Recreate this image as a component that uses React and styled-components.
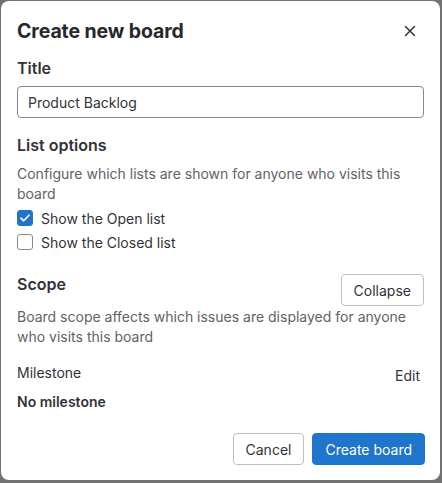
import React, { useState } from 'react';
import styled, { createGlobalStyle } from 'styled-components';

const GlobalStyle = createGlobalStyle`
  html, body {
    margin: 0;
    padding: 0;
    background: #727272;
    font-family: Inter, "Noto Sans", sans-serif;
    color: #333238;
  }
  * { box-sizing: border-box; }
`;

const Page = styled.div`
  width: 442px;
  height: 483px;
  padding: 1px 2px 3px 1px;
`;

const Modal = styled.div`
  width: 439px;
  height: 479px;
  background: #ffffff;
  border-radius: 8px;
  display: flex;
  flex-direction: column;
`;

const Header = styled.div`
  display: flex;
  align-items: center;
  justify-content: space-between;
  padding: 15px 16px 0 16px;
  height: 44px;
`;

const ModalTitle = styled.h2`
  margin: 0;
  font-size: 19.5px;
  font-weight: 700;
  color: #28272d;
  letter-spacing: -0.1px;
`;

const CloseButton = styled.button`
  border: none;
  background: none;
  padding: 4px;
  margin-right: 4px;
  display: flex;
  cursor: pointer;
`;

const Body = styled.div`
  padding: 13px 16px 0 16px;
  flex: 1;
`;

const Label = styled.div`
  font-size: 16px;
  font-weight: 600;
  line-height: 20px;
  color: #333238;
  margin-bottom: ${({ mb }) => mb ?? 8}px;
`;

const Input = styled.input`
  width: 100%;
  height: 32px;
  border: 1px solid #89888d;
  border-radius: 4px;
  padding: 0 10px;
  font-family: inherit;
  font-size: 14px;
  color: #333238;
  outline: none;
`;

const Section = styled.div`
  margin-top: ${({ mt }) => mt || 0}px;
`;

const Hint = styled.p`
  margin: 0 0 ${({ mb }) => mb ?? 2}px 0;
  font-size: 14px;
  line-height: 20px;
  color: #626168;
`;

const CheckRow = styled.label`
  display: flex;
  align-items: center;
  gap: 8px;
  height: 24px;
  font-size: 14px;
  color: #333238;
  cursor: pointer;
`;

const Box = styled.span`
  width: 16px;
  height: 16px;
  border-radius: 3px;
  border: 1px solid ${({ on }) => (on ? '#1f75cb' : '#89888d')};
  background: ${({ on }) => (on ? '#1f75cb' : '#ffffff')};
  display: flex;
  align-items: center;
  justify-content: center;
`;

const ScopeHead = styled.div`
  display: flex;
  justify-content: space-between;
  align-items: flex-start;
  margin-bottom: 1px;
`;

const Button = styled.button`
  height: 32px;
  padding: 0 ${({ px }) => px || 12}px;
  border-radius: 4px;
  font-family: inherit;
  font-size: 14px;
  cursor: pointer;
  border: 1px solid ${({ primary }) => (primary ? '#1f75cb' : '#bfbfc3')};
  background: ${({ primary }) => (primary ? '#1f75cb' : '#ffffff')};
  color: ${({ primary }) => (primary ? '#ffffff' : '#333238')};
`;

const FieldRow = styled.div`
  display: flex;
  justify-content: space-between;
  align-items: flex-end;
  font-size: 14px;
  color: #333238;
  margin-top: 17px;
  padding-right: 4px;
`;

const EditLink = styled.span`
  font-size: 14px;
  color: #333238;
  margin-bottom: -3px;
`;

const Value = styled.div`
  font-size: 14px;
  font-weight: 600;
  color: #333238;
  margin-top: 12px;
`;

const Footer = styled.div`
  display: flex;
  justify-content: flex-end;
  gap: 8px;
  padding: 0 15px 15px 16px;
`;

function Check({ on }) {
  return (
    <Box on={on ? 1 : 0}>
      {on && (
        <svg width="10" height="8" viewBox="0 0 10 8" fill="none">
          <path d="M1 4.2L3.7 6.8L9 1.2" stroke="#fff" strokeWidth="1.6" strokeLinecap="round" strokeLinejoin="round" />
        </svg>
      )}
    </Box>
  );
}

export default function App() {
  const [title, setTitle] = useState('Product Backlog');
  return (
    <>
      <GlobalStyle />
      <Page>
        <Modal>
          <Header>
            <ModalTitle>Create new board</ModalTitle>
            <CloseButton aria-label="Close">
              <svg width="12" height="12" viewBox="0 0 12 12">
                <path d="M1.5 1.5L10.5 10.5M10.5 1.5L1.5 10.5" stroke="#333238" strokeWidth="1.5" strokeLinecap="round" />
              </svg>
            </CloseButton>
          </Header>
          <Body>
            <Label>Title</Label>
            <Input value={title} onChange={(e) => setTitle(e.target.value)} />
            <Section mt={17}>
              <Label mb={9}>List options</Label>
              <Hint>Configure which lists are shown for anyone who visits this board</Hint>
              <CheckRow><Check on />Show the Open list</CheckRow>
              <CheckRow><Check />Show the Closed list</CheckRow>
            </Section>
            <Section mt={20}>
              <ScopeHead>
                <Label mb={0}>Scope</Label>
                <Button>Collapse</Button>
              </ScopeHead>
              <Hint mb={0}>Board scope affects which issues are displayed for anyone who visits this board</Hint>
              <FieldRow>
                <span>Milestone</span>
                <EditLink>Edit</EditLink>
              </FieldRow>
              <Value>No milestone</Value>
            </Section>
          </Body>
          <Footer>
            <Button>Cancel</Button>
            <Button primary>Create board</Button>
          </Footer>
        </Modal>
      </Page>
    </>
  );
}
